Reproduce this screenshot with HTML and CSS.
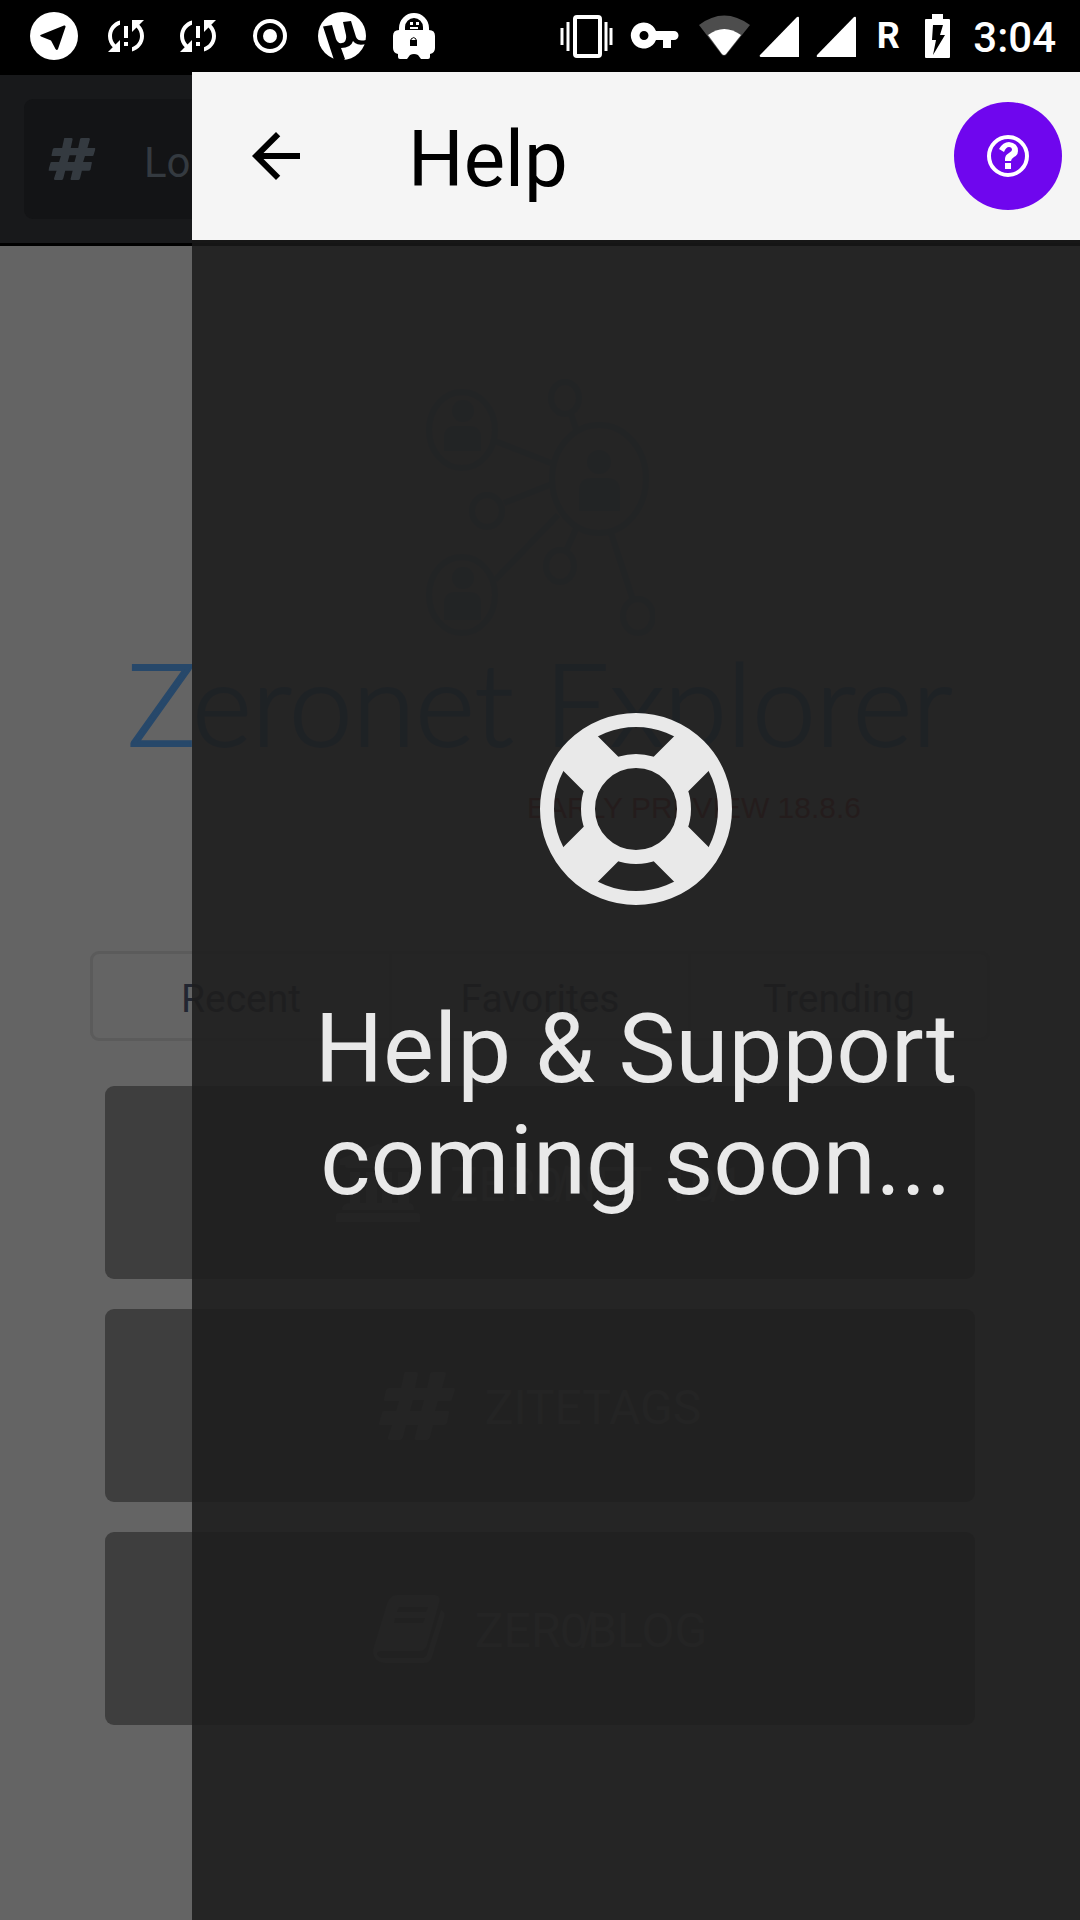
FILE: index.html
```html
<!DOCTYPE html>
<html lang="en">
<head>
<meta charset="utf-8">
<meta name="viewport" content="width=device-width, initial-scale=1">
<title>Help</title>
<link rel="stylesheet" href="styles.css">
</head>
<body>
<svg class="defs" aria-hidden="true">
  <symbol id="sync" viewBox="0 0 24 24"><path d="M3 12c0 2.210.91 4.200 2.360 5.640L3 20h6v-6l-2.240 2.240C5.680 15.150 5 13.660 5 12c0-2.610 1.670-4.830 4-5.650V4.260C5.550 5.150 3 8.270 3 12zm8 5h2v-2h-2v2zM21 4h-6v6l2.240-2.240C18.320 8.850 19 10.340 19 12c0 2.610-1.670 4.830-4 5.650v2.090c3.450-.89 6-4.010 6-7.740 0-2.210-.91-4.200-2.360-5.640L21 4zm-10 9h2V7h-2v6z"/></symbol>
  <symbol id="hash" viewBox="0 0 76 68"><path d="M26 0h11q2 0 2 2l-3 14h12l3-14q0-2 3-2h11q2 0 2 2l-4 14h12q1 0 1 2l-3 9q0 2-2 2H59l-3 10h13q2 0 1 2l-2 10q-1 2-3 2H54l-3 12q-1 3-3 3H37q-2 0-1-3l3-12H27l-3 12q-1 3-3 3H11q-3 0-2-3l4-12H1q-2 0-1-2l3-10q0-2 2-2h12l3-10H6q-2 0-1-2l2-9q1-2 3-2h12l3-14q0-2 1-2zm8 28-3 11h11l3-11z"/></symbol>
</svg>

<header class="status">
  <div class="status-left">
    <svg width="48" height="48" viewBox="0 0 48 48"><circle cx="24" cy="24" r="24"/><path fill="#000" d="M10.500 23 34 13.500q2-.5 1.500 1.500L28 37q-1 2-2.500 0L21 28.500 11 24.500q-1.500-1-.5-1.500z"/></svg>
    <svg width="48" height="48"><use href="#sync"/></svg>
    <svg width="48" height="48"><use href="#sync"/></svg>
    <svg width="48" height="48" viewBox="0 0 48 48"><circle cx="24" cy="24" r="15" fill="none" stroke="#fff" stroke-width="4"/><circle cx="24" cy="24" r="7"/></svg>
    <svg width="48" height="48" viewBox="0 0 48 48"><circle cx="24" cy="24" r="24"/><path fill="#000" d="M5 14.500 14 13l4 14q2 5 6 4 5-1 4-8L25 10l8-1 5 16q2 5 10 3v4q-7 2-11-1l-2-2q-2 7-12 7l4 11-2 2-9-1z"/></svg>
    <svg width="48" height="48" viewBox="0 0 48 48"><path d="M9 18v-2a15 15 0 0 1 30 0v2q6 0 6 6v12q0 5-5 6v3q0 2-2 2h-7l-3-4q-4-2-8 0l-3 4h-7q-2 0-2-2v-3q-5-1-5-6V24q0-6 6-6z"/><path fill="#000" d="M15 18v-3a9 9 0 0 1 18 0v3zM20 28h7v6h-7z"/><path fill="none" stroke="#000" d="M21 28v-1q3-3 5 0v1"/><path d="M20 10h3v3h-3zM26 10h3v3h-3zM20 15h8v2h-8z"/></svg>
  </div>
  <div class="status-right">
    <svg width="64" height="48" viewBox="0 0 64 48"><rect x="18" y="5" width="25" height="39" rx="2" fill="none" stroke="#fff" stroke-width="4"/><path fill="none" stroke="#fff" stroke-width="3" d="M5 16v17M11 10v29M49 10v29M54 16v17"/></svg>
    <svg width="56" height="48" viewBox="0 0 56 48"><path fill-rule="evenodd" d="M27 19a13 13 0 1 0 0 9h7v8h8v-8h3a4 4 0 0 0 0-9zM15 19a4 4 0 1 1 0 9 4 4 0 0 1 0-9z"/></svg>
    <svg width="58" height="48" viewBox="2 0 58 48"><path opacity=".3" d="M8 13q25-19 51 0L35 43q-2 1-4 0z"/><path d="M17 23q16-12 33 0L35 42q-2 2-4 0z"/></svg>
    <svg width="48" height="48" viewBox="0 0 48 48"><path d="M1 43 38 5q2-1 2 1v39H2q-2 0-1-2z"/></svg>
    <svg width="48" height="48" viewBox="0 0 48 48"><path d="M2 43 39 5q2-1 2 1v39H3q-2 0-1-2z"/></svg>
    <span class="roaming">R</span>
    <svg width="48" height="48" viewBox="0 0 48 48"><path fill-rule="evenodd" d="M15 2h11v5h6q1 0 1 1v37q0 1-1 1H9q-1 0-1-1V8q0-1 1-1h6zM16 13l-1 15h4l-3 15 12-20h-5l3-10z"/></svg>
    <span class="time">3:04</span>
  </div>
</header>

<div class="app">
  <div class="page">
    <div class="topbar">
      <label class="search">
        <svg width="48" height="42" viewBox="0 0 76 68"><use href="#hash"/></svg>
        <input class="search-input" type="text" placeholder="Lo" aria-label="Location">
      </label>
    </div>
    <main class="home">
      <svg class="logo" width="230" height="264" viewBox="425 378 230 264">
        <g fill="none" stroke-width="6">
          <ellipse cx="462" cy="430" rx="33" ry="38"/><ellipse cx="462" cy="595" rx="33" ry="38"/>
          <ellipse cx="599" cy="479" rx="47" ry="54"/>
          <ellipse cx="565" cy="398" rx="14" ry="16"/><ellipse cx="487" cy="511" rx="15" ry="16"/>
          <ellipse cx="560" cy="566" rx="14" ry="16"/><ellipse cx="638" cy="616" rx="15" ry="17"/>
          <path d="M571 414l5 15M495 441l56 22M504 503l48-19M495 580l63-65M576 529l-10 22M611 533l22 67"/>
        </g>
        <g stroke="none">
          <circle cx="463" cy="411" r="11"/><path d="M444 451v-13q0-12 11-12h14q12 0 12 12v13z"/>
          <circle cx="463" cy="578" r="11"/><path d="M444 620v-16q0-12 11-12h14q12 0 12 12v16z"/>
          <circle cx="599" cy="462" r="12"/><path d="M579 511v-20q0-13 13-13h14q14 0 14 13v20z"/>
        </g>
      </svg>
      <h1 class="brand">Zeronet Explorer</h1>
      <p class="preview">EARLY PREVIEW 18.8.6</p>
      <nav class="tabs">
        <button class="tab" type="button">Recent</button>
        <button class="tab" type="button">Favorites</button>
        <button class="tab" type="button">Trending</button>
      </nav>
      <div class="cards">
        <a class="card" href="#"><svg width="84" height="78" viewBox="0 0 84 78"><path d="M42 0 80 15v6h-5q0 3-3 3H12q-3 0-3-3H4v-6zM14 28h10v31h6V28h11v31h5V28h10v31h6V28h11v31q5 0 5 7H6q0-7 8-7zM3 69h78q3 0 3 3v6H0v-6q0-3 3-3z"/></svg><span class="card-name">ZER0̸NET 10̸1</span></a>
        <a class="card" href="#"><svg width="76" height="68"><use href="#hash"/></svg><span class="card-name">ZITETAGS</span></a>
        <a class="card" href="#"><svg width="72" height="68" viewBox="0 0 72 68"><path fill-rule="evenodd" d="M24 0h38q6 1 4 8L54 50q-2 6-7 6H9q-5 0-5 3 1 4 7 4h38q4 0 5-4L68 15q5 2 3 8L59 62q-2 6-8 6H12Q0 67 0 55L14 9q3-9 10-9zm2 12-2 5h29l2-5zm-4 11-1 5h29l2-5z"/></svg><span class="card-name">ZER0̸BLOG</span></a>
      </div>
    </main>
  </div>

  <section class="drawer">
    <header class="drawer-head">
      <button class="back" type="button" aria-label="Back"><svg width="72" height="72" viewBox="0 0 24 24"><path d="M20 11H7.830l5.590-5.590L12 4l-8 8 8 8 1.410-1.410L7.830 13H20v-2z"/></svg></button>
      <h2 class="drawer-title">Help</h2>
      <button class="help" type="button" aria-label="Help"><svg width="42" height="42" viewBox="0 0 42 42"><circle cx="21" cy="21" r="19" fill="none" stroke="#fff" stroke-width="4"/><path d="M12 14q4-7 10-7 9 1 9 9 0 4-4 6-3 2-3 4h-6v-2q0-4 4-6 3-2 3-3 0-3-3-3-3 0-5 5zM18 28h6v6h-6z"/></svg></button>
    </header>
    <div class="drawer-body">
      <svg width="192" height="192" viewBox="-96 -96 192 192" fill="none" stroke="#e9e9e9"><circle r="89" stroke-width="14"/><circle r="48" stroke-width="14"/><path stroke-width="49" d="M-63-63-34-34M63-63 34-34M-63 63-34 34M63 63 34 34"/></svg>
      <p class="message">Help &amp; Support<br>coming soon...</p>
    </div>
  </section>
</div>
</body>
</html>
```

FILE: styles.css
```css
* { box-sizing: border-box; }

body {
  margin: 0;
  min-height: 100vh;
  display: flex;
  flex-direction: column;
  background: #000;
  font-family: Roboto, "Liberation Sans", sans-serif;
}

h1, h2, p { margin: 0; font-weight: 400; }
svg { display: block; flex: none; }
button { margin: 0; padding: 0; border: 0; background: none; font: inherit; color: inherit; }
.defs { position: absolute; width: 0; height: 0; }

.status {
  display: flex;
  align-items: center;
  justify-content: space-between;
  height: 72px;
  padding: 0 24px 0 30px;
  color: #fff;
  fill: #fff;
}
.status-left { display: flex; gap: 24px; }
.status-right { display: flex; align-items: center; gap: 8px; }
.roaming {
  width: 38px;
  padding-right: 4px;
  font-size: 36px;
  font-weight: 700;
  text-align: center;
}
.time { padding-top: 2px; font-size: 42px; font-weight: 500; }

.app { position: relative; flex: 1; display: flex; flex-direction: column; }
.page { flex: 1; display: flex; flex-direction: column; background: #646464; }

.topbar {
  padding: 24px;
  background: #18191b;
  border-top: 3px solid #000;
  border-bottom: 3px solid #000;
}
.search {
  display: flex;
  align-items: center;
  gap: 48px;
  height: 120px;
  padding: 0 24px;
  border-radius: 9px;
  background: #131416;
  fill: #343a40;
}
.search-input {
  flex: 1;
  min-width: 0;
  padding: 6px 0 0;
  border: 0;
  outline: 0;
  background: none;
  font: 42px Roboto, sans-serif;
}
.search-input::placeholder { color: #343a40; opacity: 1; }

.home { display: flex; flex-direction: column; padding-top: 132px; }
.logo { align-self: center; fill: #4a5a6c; stroke: #4a5a6c; }
.brand {
  text-align: center;
  white-space: nowrap;
  font: 300 114px/120px Lato, sans-serif;
  color: #27486a;
  -webkit-text-stroke: 2px #27486a;
}
.preview {
  margin-top: 22px;
  padding-right: 219px;
  text-align: right;
  font: 30px/48px "Liberation Sans", sans-serif;
  color: #5a0f0f;
}
.tabs {
  display: flex;
  height: 90px;
  margin: 119px 90px 0;
  border: 3px solid #5b5b5b;
  border-radius: 9px;
}
.tab { flex: 1; padding-top: 6px; font-size: 39px; color: #222631; }
.tab + .tab { border-left: 3px solid #5b5b5b; }

.cards { display: flex; flex-direction: column; gap: 30px; margin: 45px 105px; }
.card {
  display: flex;
  align-items: center;
  justify-content: center;
  gap: 30px;
  height: 193px;
  border-radius: 9px;
  background: #3e3e3e;
  color: #5a5a5a;
  fill: #5a5a5a;
  font-size: 48px;
  text-decoration: none;
}
.card-name { padding-top: 4px; line-height: 56px; }

.drawer {
  position: absolute;
  top: 0;
  right: 0;
  bottom: 0;
  left: 192px;
  display: flex;
  flex-direction: column;
  background: rgba(30, 30, 30, .9);
}
.drawer-head {
  display: flex;
  align-items: center;
  height: 168px;
  padding: 0 18px 0 48px;
  background: #f5f5f5;
  box-shadow: 0 6px 0 rgba(0, 0, 0, .2);
}
.drawer-title { flex: 1; padding: 8px 0 0 96px; font-size: 78px; line-height: 96px; }
.help {
  display: grid;
  place-items: center;
  width: 108px;
  height: 108px;
  border-radius: 50%;
  background: #6f06ee;
  fill: #fff;
}
.drawer-body {
  display: flex;
  flex-direction: column;
  align-items: center;
  gap: 88px;
  padding-top: 473px;
}
.message { text-align: center; font-size: 96px; line-height: 112px; color: #e9e9e9; }
```
